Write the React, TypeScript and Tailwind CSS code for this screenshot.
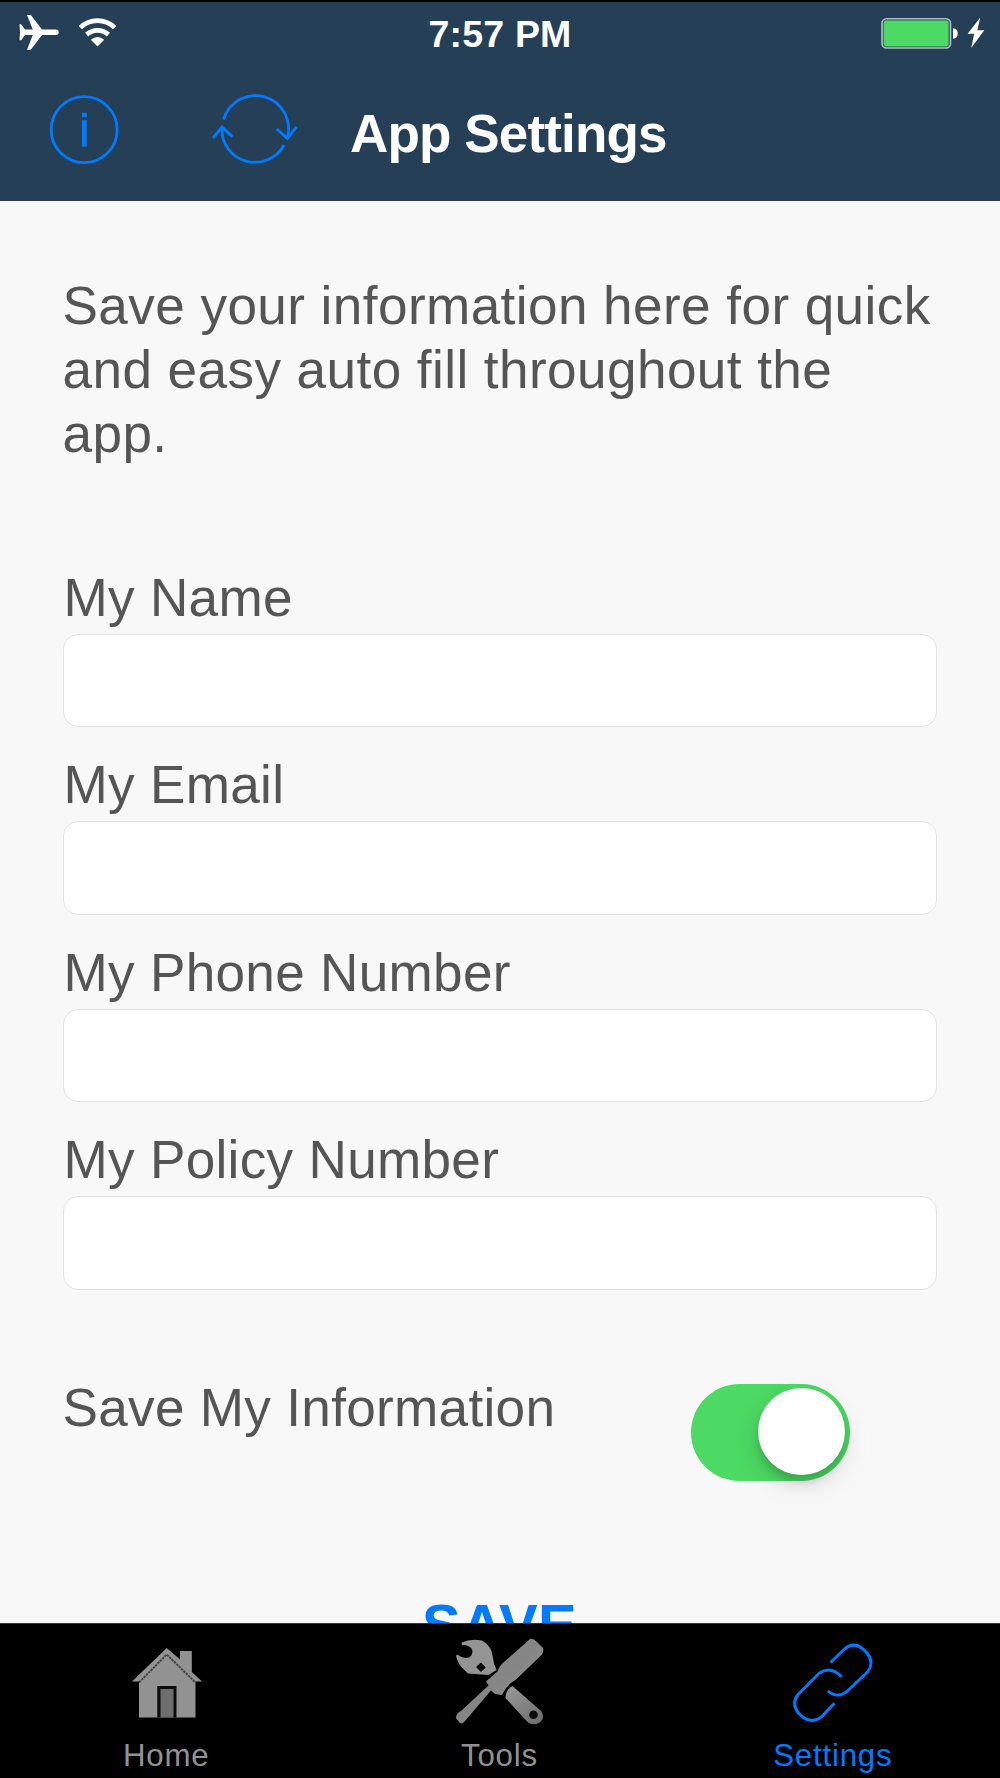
import { useState } from 'react'
import type { ReactNode } from 'react'

const fields = [
  { id: 'name', label: 'My Name' },
  { id: 'email', label: 'My Email' },
  { id: 'phone', label: 'My Phone Number' },
  { id: 'policy', label: 'My Policy Number' },
]

function AirplaneIcon() {
  return (
    <svg className="h-9 w-[42px]" viewBox="0 0 42 36" fill="#fff">
      <path d="M39 14.6H25L14.2 .4Q13.8 0 13 0H10L15.8 14.6H8L4.2 9.3H2.5L3 17.3L2.5 25.3H4.2L8 20H15.8L10 34.8H13Q13.8 34.8 14.2 34.2L25 20H39A2.7 2.7 0 0 0 39 14.6Z" />
    </svg>
  )
}

function WifiIcon() {
  return (
    <svg className="h-[30px] w-10" viewBox="0 0 40 30">
      <path d="M2.4 9.6A24.5 24.5 0 0 1 36.6 9.6" fill="none" stroke="#fff" strokeWidth="4.8" />
      <path d="M8.6 16.6A16.4 16.4 0 0 1 30.4 16.6" fill="none" stroke="#fff" strokeWidth="4.8" />
      <path d="M19.5 28.5L12.8 21.8Q19.5 16 26.2 21.8Z" fill="#fff" />
    </svg>
  )
}

function BatteryIcon() {
  return (
    <svg className="-mr-1 h-9 w-[110px] shrink-0" viewBox="0 0 110 36">
      <rect x="5" y="3.7" width="68.5" height="29.3" rx="4.5" fill="none" stroke="#b5bcc6" strokeWidth="1.6" />
      <rect x="6.7" y="5.3" width="65.1" height="26.2" rx="2.5" fill="#4cd964" stroke="#3b8f60" strokeWidth="1" />
      <path d="M76 13.3C79.2 13.5 80.7 15.5 80.7 18.5C80.7 21.5 79.2 23.6 76 23.8Z" fill="#fff" />
      <path d="M103.3 2.6L90.6 18.8H97.2L94.2 33L107.3 15.2H100.3Z" fill="#fff" />
    </svg>
  )
}

function InfoIcon() {
  return (
    <svg className="h-[72px] w-[72px]" viewBox="0 0 72 72">
      <circle cx="36.2" cy="36.7" r="33" fill="none" stroke="#007aff" strokeWidth="2.8" />
      <rect x="33.9" y="19.7" width="4.8" height="4.5" fill="#007aff" />
      <rect x="33.9" y="27.2" width="4.8" height="26.5" fill="#007aff" />
    </svg>
  )
}

function RefreshIcon() {
  return (
    <svg className="h-[72px] w-[88px]" viewBox="0 0 88 72" fill="none" stroke="#007aff" strokeWidth="2.8">
      <path d="M12.6 26.7A33 33 0 0 1 76.3 44.8" />
      <path d="M73 52A33 33 0 0 1 11 34" />
      <path d="M2 45L11 34.1L21.6 43.6" />
      <path d="M65.7 36L76.3 45.4L85.6 33.9" />
    </svg>
  )
}

function HomeIcon() {
  return (
    <svg className="h-[74px] w-[74px]" viewBox="0 0 74 74">
      <path d="M36.7 3L2 36.5H9V72.5H65.5V36.5H72L61.8 27V6H50V14.5Z" fill="#929292" />
      <path d="M9 37.5L36.7 9.5L65.5 37.5" fill="none" stroke="#444" strokeWidth="1.9" strokeDasharray="2.5 .8" />
      <path d="M27.3 72.5V41H46.5V72.5" fill="#0c0c0c" />
      <rect x="30.5" y="44" width="13" height="28.5" fill="#6e6e6e" />
    </svg>
  )
}

function ToolsIcon() {
  return (
    <svg className="mt-[2px] h-[90px] w-[90px]" viewBox="0 0 90 90">
      <defs>
        <linearGradient id="handle" x1="0" y1="0" x2="1" y2="1">
          <stop offset="0" stopColor="#9a9a9a" />
          <stop offset="1" stopColor="#6c6c6c" />
        </linearGradient>
        <linearGradient id="grip" x1="0" y1="0" x2="1" y2="1">
          <stop offset="0" stopColor="#8c8c8c" />
          <stop offset=".5" stopColor="#858585" />
          <stop offset="1" stopColor="#a0a0a0" />
        </linearGradient>
      </defs>
      {/* wrench */}
      <path
        d="M6.5 4.5Q16 .5 27 2.5Q37 8 38 20Q38.5 26 41.5 32L33.5 37L13 35.5L10.5 33Q3 27 1 18L2 16.5Q8 21 14 19.5Q18.5 17 17 11Q13 6.5 7 7Z"
        fill="#949494"
      />
      <path d="M22 29L26 25.5L29.8 29.5L26 33Z" fill="#0b0b0b" stroke="#0b0b0b" strokeWidth="1.5" strokeLinejoin="round" />
      <path d="M57.5 48L86 73Q91 80 84 85Q78 88 72.5 84L50.5 60Q51 51 57.5 48Z" fill="url(#handle)" />
      <circle cx="78.5" cy="76.7" r="4.3" fill="#0b0b0b" />
      {/* screwdriver */}
      <path
        d="M75 1Q78 0 82 4L88 10Q89 14 86.5 17L60.5 42Q52 46 47 57L40 56L36 52.5L9.5 83.5Q6 87 4 84L.8 80Q1.5 75 6 73L33.5 47.5L31 43.5L43 33Q44 28 49 24Z"
        fill="url(#grip)"
      />
    </svg>
  )
}

function LinkIcon() {
  return (
    <svg className="mr-px h-20 w-20" viewBox="0 0 80 80" fill="none" stroke="#007aff" strokeWidth="2.9">
      <path d="M37.5 20.5L50.5 8Q60.5 -1.5 70.5 7.5L74 11Q81.5 20 75 29.5L54.5 49Q45 57.2 34.8 48.8" />
      <path d="M48.5 34.8Q37.5 23.3 26 31.3L5.5 52Q-2 60.8 5 70.5L9.5 74.8Q19 82.2 28.5 74.8L41.5 61.3" />
    </svg>
  )
}

function Tab({ icon, label, active = false }: { icon: ReactNode; label: string; active?: boolean }) {
  return (
    <button className={`flex flex-1 flex-col items-center ${active ? 'text-[#007aff]' : 'text-[#929292]'}`}>
      <span className="flex h-[116px] w-full items-center justify-center">{icon}</span>
      <span className="-mt-[2px] mr-px text-[31.25px] leading-9 tracking-[0.8px]">{label}</span>
    </button>
  )
}

export default function App() {
  const [saveInfo, setSaveInfo] = useState(true)

  return (
    <div className="flex h-[1778px] w-[1000px] flex-col overflow-hidden bg-[#f8f8f8] font-['Liberation_Sans',Arial,sans-serif] text-[#555]">
      <header className="h-[201px] shrink-0 border-t-2 border-black bg-[#253f56] text-white">
        {/* Status bar */}
        <div className="flex h-[62px] items-center px-[17px]">
          <div className="flex flex-1 items-center gap-[18.5px]">
            <AirplaneIcon />
            <WifiIcon />
          </div>
          <span className="pt-[2px] text-[37.5px] font-bold tracking-[0.2px]">7:57 PM</span>
          <div className="flex flex-1 justify-end">
            <BatteryIcon />
          </div>
        </div>

        <div className="flex items-start pl-12 pt-[29px]">
          <InfoIcon />
          <span className="ml-[91px]">
            <RefreshIcon />
          </span>
          <h1 className="ml-[51px] mt-[5px] text-[53px] font-bold leading-[72px] tracking-[-0.85px]">App Settings</h1>
        </div>
      </header>

      {/* Form, cut off by the tab bar */}
      <main className="h-[1422px] shrink-0 overflow-hidden pl-[62.5px] pr-[63.5px] pt-[73px] text-[53.125px] leading-[63.75px] tracking-[0.4px]">
        <p className="h-[291.6px] tracking-[0.42px]">
          Save your information here for quick
          <br />
          and easy auto fill throughout the
          <br />
          app.
        </p>

        {fields.map((f) => (
          <div key={f.id} className="h-[187.5px]">
            <label htmlFor={f.id} className="block pl-px tracking-[0.3px]">
              {f.label}
            </label>
            <input
              id={f.id}
              className="mt-[4.3px] block h-[93.5px] w-full rounded-[15px] border border-[#e2e2e2] bg-white px-5 outline-none"
            />
          </div>
        ))}

        <div className="flex justify-between pt-[60.4px]">
          <span className="tracking-[0.3px]">Save My Information</span>
          <button
            role="switch"
            aria-checked={saveInfo}
            onClick={() => setSaveInfo(!saveInfo)}
            className={`mr-[86.5px] mt-[8px] flex h-[97px] w-[159.5px] items-start rounded-full px-[5px] pt-1 ${
              saveInfo ? 'justify-end bg-[#4cd964]' : 'justify-start bg-[#e5e5e5]'
            }`}
          >
            <span className="size-[87px] rounded-full bg-white shadow-[0_9px_24px_rgba(0,0,0,0.15),0_7px_7px_rgba(0,0,0,0.12)]" />
          </button>
        </div>

        <div className="mt-[112px] text-center text-[58px] font-bold text-[#007aff]">SAVE</div>
      </main>

      <nav className="flex flex-1 border-t border-[#333] bg-black">
        <Tab icon={<HomeIcon />} label="Home" />
        <Tab icon={<ToolsIcon />} label="Tools" />
        <Tab icon={<LinkIcon />} label="Settings" active />
      </nav>
    </div>
  )
}
